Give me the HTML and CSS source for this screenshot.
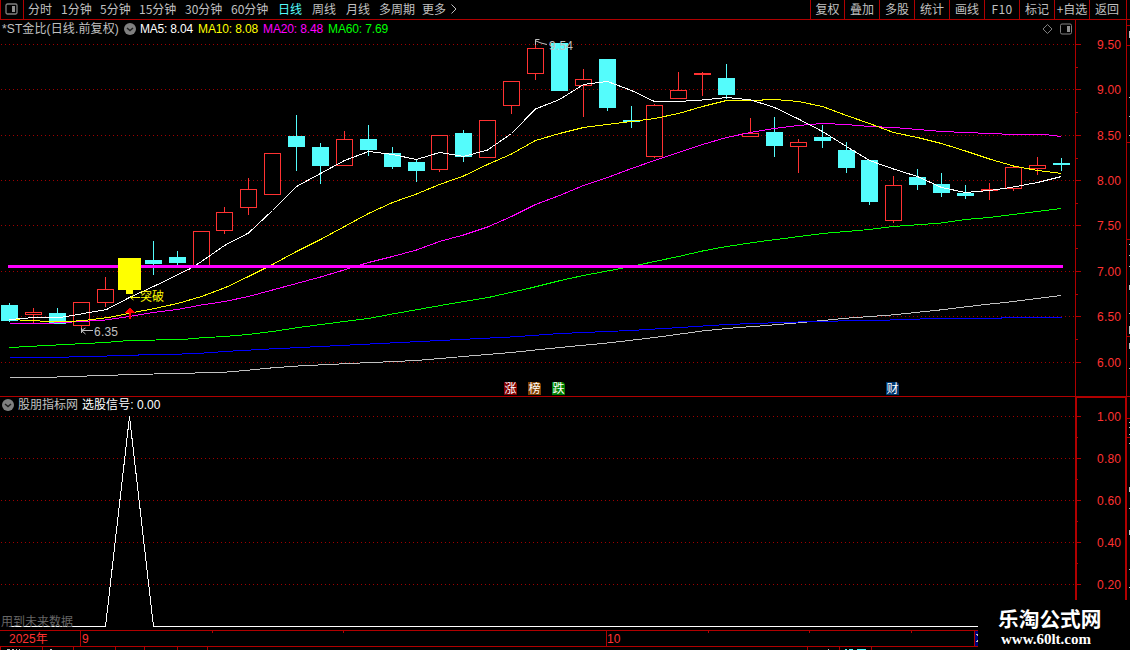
FILE: index.html
```html
<!DOCTYPE html>
<html lang="zh-CN">
<head>
<meta charset="utf-8">
<title>*ST金比 日线</title>
<link rel="stylesheet" href="styles.css">
</head>
<body>
<div class="app">
  <header class="toolbar">
    <div class="panel-toggle">
      <svg width="13" height="12" viewBox="0 0 13 12"><rect class="ic-frame" x="1" y="1" width="11" height="10" rx="1.5"/><rect class="ic-fill" x="7" y="3" width="3" height="6"/></svg>
    </div>
    <nav class="periods">
      <a>分时</a><a class="w39">1分钟</a><a class="w39">5分钟</a><a class="w46">15分钟</a><a class="w46">30分钟</a><a class="w47">60分钟</a><a class="w34 active">日线</a><a class="w34">周线</a><a>月线</a><a class="w43">多周期</a><a class="more">更多<svg width="6" height="10" viewBox="0 0 6 10"><path d="M.5.5 5 5 .5 9.500"/></svg></a>
    </nav>
    <nav class="tools">
      <a class="w34">复权</a><a>叠加</a><a>多股</a><a>统计</a><a>画线</a><a class="f10">F10</a><a>标记</a><a>+自选</a><a class="last">返回</a>
    </nav>
  </header>

  <main class="panel price">
    <svg class="plot" width="1130" height="376" viewBox="0 20 1130 376">
      <g id="price-grid"></g>
      <g class="frame"><path d="M1075.500 20V396M1126.500 20V396"/></g>
      <g id="price-ticks" class="frame"></g>
      <g id="candles"></g>
      <g id="lines"></g>
      <rect class="level" x="8" y="265" width="1055" height="3"/>
      <rect class="signal" x="118" y="258" width="23" height="32"/>
      <rect class="signal" x="126" y="290" width="7" height="4"/>
      <path class="buy" d="M130 307l5 6h-4v6h-2v-6h-4z"/>
      <path class="note-line gold" d="M130 297.500h10M133.500 295l-3 2.500 3 2.500"/>
      <text class="gold" x="140" y="301" textLength="24">突破</text>
      <path class="note-line" d="M93 330.500H81.500M85.500 328l-4 2.500 4 3.500M81.500 328v5"/>
      <text class="note" x="94" y="336" textLength="24">6.35</text>
      <path class="note-line" d="M535.500 45v-5.500h4M536 41l5 2 6 1.500"/>
      <text class="note" x="549" y="50" textLength="24">9.54</text>
      <g id="price-labels" class="labels"></g>
      <g class="badges">
        <path fill="#800000" d="M504 382h11l2 2v11h-13z"/><text x="504.500" y="393">涨</text>
        <path fill="#804000" d="M528 382h11l2 2v11h-13z"/><text x="528.500" y="393">榜</text>
        <path fill="#008000" d="M552 382h11l2 2v11h-13z"/><text x="552.500" y="393">跌</text>
        <path fill="#003870" d="M886 382h11l2 2v11h-13z"/><text x="886.500" y="393">财</text>
      </g>
      <path class="edge" d="M1129.500 31v7M1129.500 97v1M1129.500 116v1M1129.500 135v1M1129.500 244v1M1129.500 255v1M1129.500 266v1M1129.500 285v5M1129.500 313v1M1129.500 326v8M1129.500 343v6M1129.500 368v1"/>
      <path class="frame-line" d="M1127 25.500h3M1127 45.500h3M1127 142.500h3M1127 239.500h3M1127 336.500h3"/>
    </svg>
    <div class="legend">
      <span class="stock">*ST金比(日线.前复权)</span>
      <svg class="drop" width="12" height="12" viewBox="0 0 12 12"><circle cx="6" cy="6" r="6"/><path d="M3 5l3 2.500L9 5"/></svg>
      <span class="ma5">MA5: 8.04</span><span class="ma10">MA10: 8.08</span><span class="ma20">MA20: 8.48</span><span class="ma60">MA60: 7.69</span>
      <svg class="corner" width="32" height="12" viewBox="0 0 32 12"><path d="M6.500 1.500l4.500 4.500-4.500 4.500L2 6z"/><rect x="19.500" y="1" width="11" height="10" rx="1.500"/><rect class="ic-fill" x="26" y="3" width="3" height="6"/></svg>
    </div>
  </main>

  <section class="panel indicator">
    <svg class="plot" width="1130" height="234" viewBox="0 396 1130 234">
      <path class="frame-line" d="M0 396.500H1130M1127 418.500h3M1127 437.500h3"/>
      <g id="sub-grid"></g>
      <g class="thick"><path d="M1076 600V397H1126V600"/></g>
      <g id="sub-ticks" class="frame"></g>
      <g id="sub-labels" class="labels"></g>
      <polyline class="pulse" points="9,626.500 105.500,626.500 129.500,416.500 153.500,626.500 978,626.500"/>
      <path class="edge" d="M1129.500 422v1M1129.500 427v1M1129.500 434v1M1129.500 443v1M1129.500 487v5M1129.500 508v1M1129.500 530v5M1129.500 569v1M1129.500 587v1"/>
    </svg>
    <div class="legend">
      <svg class="drop" width="12" height="12" viewBox="0 0 12 12"><circle cx="6" cy="6" r="6"/><path d="M3 5l3 2.500L9 5"/></svg>
      <span class="source">股朋指标网</span><span class="value">选股信号: 0.00</span>
    </div>
    <div class="future">用到未来数据</div>
  </section>

  <footer class="timeline">
    <span class="year">2025年</span><span class="month sep">9</span><span class="month oct">10</span><span class="cursor"><svg width="2" height="15" viewBox="0 0 2 15"><path class="edge" d="M0 3.500h2M1 4.500h1M1 9.500h1M0 10.500h2"/></svg></span>
  </footer>
  <svg class="strip" width="1130" height="3" viewBox="0 647 1130 3">
    <path class="frame-line" d="M.5 647v3M42.500 647v3M73.500 647v3M115.500 647v3M144.500 647v3M177.500 647v3M207.500 647v3M807.500 647v3M839.500 647v3M871.500 647v3"/>
    <path class="edge" d="M7 649.500h3M12 649.500h2M16 649.500h1M19 649.500h1M50 649.500h2M828 649.500h1"/>
    <path class="cyan-edge" d="M845 649.500h2M849 649.500h4M857 649.500h9"/>
  </svg>

  <aside class="watermark"><strong>乐淘公式网</strong><b>www.60lt.com</b></aside>
</div>
<script src="chart.js"></script>
</body>
</html>
```
FILE: styles.css
```css
* { box-sizing: border-box; }
body {
  margin: 0;
  background: #000;
  color: #c0c0c0;
  font: 12px/18px "Liberation Sans", "Noto Sans CJK SC", sans-serif;
  overflow: hidden;
}
.app { position: relative; width: 1130px; height: 650px; display: flex; flex-direction: column; }
svg { display: block; flex: none; }

.toolbar { display: flex; height: 20px; border-bottom: 1px solid #b00000; }
.panel-toggle {
  width: 24px; padding: 3px 0 0 4px;
  border: 0 solid #b00000; border-width: 0 1px;
}
.ic-frame { fill: none; stroke: #808080; stroke-width: 1.3; }
.ic-fill { fill: #909090 !important; stroke: none !important; }
.periods { display: flex; padding-left: 4px; font-family: "Noto Sans CJK SC", sans-serif; }
.periods a { width: 33px; white-space: nowrap; }
.periods .w34 { width: 34px; }
.periods .w39 { width: 39px; }
.periods .w43 { width: 43px; }
.periods .w46 { width: 46px; }
.periods .w47 { width: 47px; }
.periods .active { color: #54fcfc; }
.periods .more { display: flex; width: 40px; gap: 5px; height: 18px; align-items: center; }
.more path { fill: none; stroke: #c0c0c0; }
.tools { display: flex; margin-left: auto; margin-right: 3px; font-family: "Noto Sans CJK SC", sans-serif; }
.tools a { width: 35px; border-left: 1px solid #b00000; text-align: center; white-space: nowrap; letter-spacing: -.1px; }
.tools .w34 { width: 34px; }
.tools .f10 { letter-spacing: .4px; }
.tools .last { width: 38px; border-right: 1px solid #b00000; padding-right: 2px; }

.panel { display: grid; }
.panel > * { grid-area: 1 / 1; }
.price { height: 376px; }
.indicator { height: 234px; }
.plot { font: 12px "Liberation Sans", "Noto Sans CJK SC", sans-serif; }

.legend { align-self: start; display: flex; align-items: center; height: 18px; white-space: nowrap; }
.price .legend { padding-left: 2px; }
.stock { width: 117px; margin-right: 5px; letter-spacing: .12px; }
.drop circle { fill: #808080; }
.drop path { fill: none; stroke: #202020; stroke-width: 1.5; }
.ma5 { width: 58px; margin-left: 4px; color: #fff; letter-spacing: -.2px; }
.ma10, .ma20, .ma60 { width: 65px; letter-spacing: -.12px; }
.ma10 { color: #ff0; }
.ma20 { color: #f0f; }
.ma60 { color: #0f0; }
.corner { margin-left: auto; margin-right: 57px; }
.corner path, .corner rect { fill: none; stroke: #808080; }
.indicator .legend { padding-left: 2px; }
.source { width: 64px; margin-left: 4px; }
.value { color: #fff; letter-spacing: .05px; }
.future { align-self: end; color: #666; height: 17px; padding-left: 1px; }

.grid-line { stroke: #a00000; stroke-dasharray: 1 3; shape-rendering: crispEdges; }
.frame path, .frame-line { fill: none; stroke: #b00000; shape-rendering: crispEdges; }
.thick path { fill: none; stroke: #b00000; stroke-width: 2; shape-rendering: crispEdges; }
.labels text { fill: #ff3232; }
.up { fill: #000; stroke: #ff3232; shape-rendering: crispEdges; }
.down { fill: #54fcfc; }
.up-wick { stroke: #ff3232; shape-rendering: crispEdges; }
.down-wick { stroke: #54fcfc; shape-rendering: crispEdges; }
.series { fill: none; stroke-width: 1; shape-rendering: crispEdges; }
.level { fill: #f0f; }
.signal { fill: #ff0; }
.buy { fill: #f00; shape-rendering: crispEdges; }
.note { fill: #c0c0c0; }
.note-line { fill: none; stroke: #c0c0c0; }
text.gold { fill: #ff0; }
path.gold { stroke: #ff0; }
.badges text { fill: #fff; font-family: "Noto Sans CJK SC", sans-serif; }
.edge { stroke: #c0c0c0; shape-rendering: crispEdges; }
.cyan-edge { stroke: #54fcfc; shape-rendering: crispEdges; }
.pulse { fill: none; stroke: #fff; shape-rendering: crispEdges; }

.timeline {
  display: flex; width: 978px; height: 17px; line-height: 16px; color: #ff3232;
  border: 1px solid #b00000; border-width: 1px 0;
  background:
    linear-gradient(#b00000, #b00000) 212px 0 / 1px 2px no-repeat,
    linear-gradient(#b00000, #b00000) 343px 0 / 1px 2px no-repeat,
    linear-gradient(#b00000, #b00000) 708px 0 / 1px 2px no-repeat,
    linear-gradient(#b00000, #b00000) 809px 0 / 1px 2px no-repeat,
    linear-gradient(#b00000, #b00000) 911px 0 / 1px 2px no-repeat;
}
.year { width: 80px; padding-left: 9px; }
.month { border-left: 1px solid #b00000; padding-left: 1px; }
.sep { width: 526px; }
.oct { width: 368px; padding-left: 0; }
.cursor { width: 4px; padding-left: 1px; border-left: 1px solid #b00000; background: #000080; }

.watermark {
  position: absolute; left: 978px; top: 600px; width: 152px; height: 50px;
  display: flex; flex-direction: column; background: #000; color: #fff; white-space: nowrap;
}
.watermark strong { margin: 6px 0 0 20px; font: bold 20.7px/24px "Noto Sans CJK SC", sans-serif; }
.watermark b { margin: 1px 0 0 23px; font: bold 15px/16px "Liberation Serif", serif; }
```
FILE: chart.js
```js
const NS = 'http://www.w3.org/2000/svg';
const add = (id, tag, attrs, text) => {
  const el = document.createElementNS(NS, tag);
  for (const k in attrs) el.setAttribute(k, attrs[k]);
  if (text) el.textContent = text;
  document.getElementById(id).appendChild(el);
};

// x, body top, body bottom, wick top, wick bottom, rising
const candles = [
  [9,305,321,303,322,0],[33,312,315,308,323,1],[57,313,324,308,324,0],[81,302,326,302,331,1],
  [105,289,303,277,307,1],[153,260,264,241,275,0],[177,257,263,251,265,0],[201,231,266,231,266,1],
  [224,212,231,207,234,1],[248,189,208,178,215,1],[272,153,195,153,195,1],[296,136,147,115,171,0],
  [320,147,166,143,184,0],[344,139,166,131,166,1],[368,139,150,125,156,0],[392,153,167,147,169,0],
  [416,162,171,160,182,0],[439,135,170,135,172,1],[463,133,157,130,162,0],[487,120,158,120,158,1],
  [511,81,106,81,114,1],[535,48,74,40,80,1],[559,43,91,43,91,0],[583,79,86,69,117,1],
  [607,59,108,59,111,0],[631,120,122,106,128,0],[654,105,157,104,158,1],[678,90,99,72,99,1],
  [702,73,75,72,96,1],[726,78,95,64,99,0],[750,133,137,118,137,1],[774,132,146,117,157,0],
  [798,142,147,139,173,1],[822,137,141,125,148,0],[846,150,168,142,173,0],[869,160,202,160,205,0],
  [893,185,221,176,223,1],[917,177,185,169,190,0],[941,184,193,173,197,0],[965,193,196,185,199,0],
  [989,189,191,183,200,1],[1013,167,189,166,191,1],[1037,165,169,157,175,1],[1061,163,165,158,171,0]
];
for (const [x, t, b, wt, wb, up] of candles) {
  add('candles', 'line', { class: up ? 'up-wick' : 'down-wick', x1: x + .5, x2: x + .5, y1: wt, y2: wb });
  if (up) add('candles', 'rect', { class: 'up', x: x - 7.5, y: t + .5, width: 16, height: b - t - 1 });
  else add('candles', 'rect', { class: 'down', x: x - 8, y: t, width: 17, height: b - t });
}

const series = [
  ['#c0c0c0', '9,377 45,377 69,376 105,375 130,374 177,373 224,371.7 248,369.7 272,367.3 300,365.3 360,362.5 416,360 463,356 511,352 559,347 607,342.5 654,337 702,330.5 726,328 762,325.3 798,322.3 846,317.7 893,314.3 941,309.3 965,306.3 989,303.6 1013,301 1037,298 1061,295'],
  ['#0000ff', '9,357 45,357 93,356 129,354.7 177,353.7 201,352.7 224,351 272,348.3 300,347 380,343 440,340 510,336.5 560,333 630,330 680,327 726,324 762,322.7 822,320.7 880,320 900,319 940,318 1000,318 1002,317 1061,317'],
  ['#00ff00', '9,347 65,344 105,342 129,340 182,339 201,337.3 224,336 248,334 272,331 300,326.7 340,321.5 368,318 392,313.5 440,305 473,299.5 490,296.5 530,287.5 560,280 583,275 631,266 654,261 678,256 702,250.5 726,246 760,241 822,233 869,229 893,226 941,222.5 965,219 989,217 1013,214 1037,211 1061,208'],
  ['#ff00ff', '9,323 45,323 81,321 105,319.5 129,316 153,312 177,309 201,304.5 224,301 248,296 272,289.5 296,283 320,276.5 344,269.3 368,262 392,256 416,249.5 439,241 463,234.5 487,226.5 511,216 535,204 559,195 583,185 607,177 631,168 654,160 678,152 702,144 726,137 750,132 774,128 798,125 822,123 846,124 869,126 893,127 917,129 941,131 965,132 989,133 1013,134 1044,134 1061,136'],
  ['#ffff00', '9,319 50,321 68,321 83,320 108,317 133,312 154,308 177,303 201,296 225,287 248,276 272,264 296,251 320,239 344,226 368,213 392,202 416,193.5 439,184 463,175.500 487,164 511,153.500 535,140 559,133 583,127 607,124 631,121 654,118 678,113 702,106 726,100 750,100 774,99 798,101 822,106 846,115 869,123 893,132 917,137 941,143 965,150.5 989,158.5 1013,165.5 1037,170 1061,173'],
  ['#ffffff', '9,319 16,318.5 33,317 63,316.5 106,309 129,297 153,286 190,268 201,261 224,245 248,232.500 272,210 296,186 320,173 344,160 368,151 392,154 416,159 439,152 463,156 487,149.5 511,133 535,108.5 559,99 583,84 607,81 631,90 654,101 678,101 702,99.5 726,97 750,99.3 774,107 798,118.5 822,131 846,146 869,160 893,168.5 917,176 941,187 965,192 989,190 1013,186.5 1037,182 1061,176']
];
for (const [stroke, points] of series) add('lines', 'polyline', { class: 'series', stroke, points, transform: 'translate(.5 .5)' });

const axis = (prefix, rows, step) => rows.forEach(([y, label], i) => {
  add(prefix + '-grid', 'line', { class: 'grid-line', x1: 1, x2: 1075, y1: y + .5, y2: y + .5 });
  add(prefix + '-ticks', 'path', { d: `M1076 ${y + .5}h5` });
  if (i < rows.length - 1) add(prefix + '-ticks', 'path', { d: `M1076 ${Math.round(y + step) + .5}h2` });
  add(prefix + '-labels', 'text', { x: 1097, y: y + 5, textLength: 24 }, label);
});
axis('price', [[44,'9.50'],[89,'9.00'],[135,'8.50'],[180,'8.00'],[225,'7.50'],[271,'7.00'],[316,'6.50'],[362,'6.00']], 22.6);
axis('sub', [[416,'1.00'],[458,'0.80'],[500,'0.60'],[542,'0.40'],[584,'0.20']], 21);
```
